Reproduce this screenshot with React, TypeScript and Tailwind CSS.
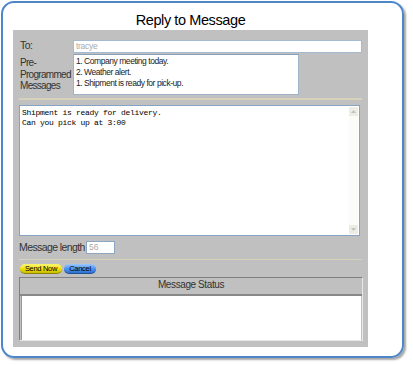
const presets = [
  "1. Company meeting today.",
  "2. Weather alert.",
  "1. Shipment is ready for pick-up.",
];

function ScrollArrow({ up }: { up?: boolean }) {
  return (
    <div className="w-[9px] h-[9px] bg-[#eeede5] flex items-center justify-center">
      <svg width="5" height="3" viewBox="0 0 5 3">
        <path d={up ? "M0 3 L2.5 0 L5 3 Z" : "M0 0 L2.5 3 L5 0 Z"} fill="#c3c3bb" />
      </svg>
    </div>
  );
}

export default function App() {
  return (
    <div className="w-[413px] h-[365px] bg-white pt-[1px] pl-[1px] font-['Liberation_Sans',Arial,sans-serif]">
      <div className="w-[403px] h-[357px] border-2 border-[#4d86c9] rounded-[13px] shadow-[2px_2px_2px_rgba(0,0,0,0.35)] pt-[8px] pl-[10px]">
        <h1 className="w-[355px] h-[19px] text-center text-[14.5px] leading-[19px] tracking-[-0.4px] text-black">
          Reply to Message
        </h1>
        <div className="w-[355px] h-[317px] bg-[#c0c0c0] px-[6px] pt-[10px] text-[#333]">
          <div className="flex items-start">
            <span className="w-[54px] pl-[1px] text-[10.5px] tracking-[-0.5px] leading-[13px] mt-[-1px]">To:</span>
            <div className="w-[289px] h-[13px] bg-white border border-[#a5b9d1] text-[8.5px] leading-[11px] tracking-[-0.3px] text-[#aaa] pl-[2px]">
              tracye
            </div>
          </div>
          <div className="flex items-start mt-[1px]">
            <span className="w-[54px] pl-[1px] leading-[11.5px] mt-[3px] text-[10px] tracking-[-0.7px]">
              Pre-
              <br />
              Programmed
              <br />
              Messages
            </span>
            <div className="w-[226px] h-[41px] bg-white border border-[#9fb3c9] border-t-[#8a9fb8] text-[8.5px] tracking-[-0.45px] leading-[11px] text-[#222] pl-[2px] pt-[1px]">
              {presets.map((p, i) => (
                <div key={i}>{p}</div>
              ))}
            </div>
          </div>
          <div className="w-[343px] h-[2px] bg-[#d6d1b9] mt-[3px]" />
          <div className="w-[341px] h-[131px] mt-[5px] bg-white border border-[#86a3c4] flex">
            <div className="flex-1 pl-[2px] pt-[2px] font-['Liberation_Mono','Courier_New',monospace] text-[8px] tracking-[-0.3px] leading-[10px] text-black">
              <div>Shipment is ready for delivery.</div>
              <div>Can you pick up at 3:00</div>
            </div>
            <div className="w-[9px] bg-[#fbfbf8] flex flex-col justify-between mr-[1px] my-[1px]">
              <ScrollArrow up />
              <ScrollArrow />
            </div>
          </div>
          <div className="flex items-center mt-[5px] h-[13px]">
            <span className="w-[67px] whitespace-nowrap text-[10.5px] tracking-[-0.6px] leading-[13px] text-[#333]">
              Message length
            </span>
            <div className="w-[29px] h-[13px] bg-white border border-[#8da6c2] text-[8.5px] leading-[11px] text-[#aaa] pl-[2px]">
              56
            </div>
          </div>
          <div className="w-[343px] h-[1px] bg-[#d6d1b9] mt-[5px]" />
          <div className="flex gap-[2px] mt-[4px] pl-[1px]">
            <div className="w-[42px] h-[10px] rounded-full bg-gradient-to-b from-[#fbf66a] via-[#f2e40d] to-[#c9bb00] border-b border-[#8e8400] text-[7.5px] tracking-[-0.3px] leading-[9px] text-center text-black">
              Send Now
            </div>
            <div className="w-[32px] h-[10px] rounded-full bg-gradient-to-b from-[#9cc8ff] via-[#4f96f2] to-[#2d6fd1] border-b border-[#1f4f96] text-[7.5px] tracking-[-0.3px] leading-[9px] text-center text-black">
              Cancel
            </div>
          </div>
          <div className="w-[344px] h-[64px] mt-[3px] border border-[#808080] border-r-[#e8e8e8] border-b-[#e8e8e8] flex flex-col">
            <div className="h-[18px] text-center text-[10px] tracking-[-0.4px] leading-[14px] text-[#333] border-b-2 border-[#888]">
              Message Status
            </div>
            <div className="flex-1 mx-[1px] bg-white border-l border-[#999]" />
          </div>
        </div>
      </div>
    </div>
  );
}
